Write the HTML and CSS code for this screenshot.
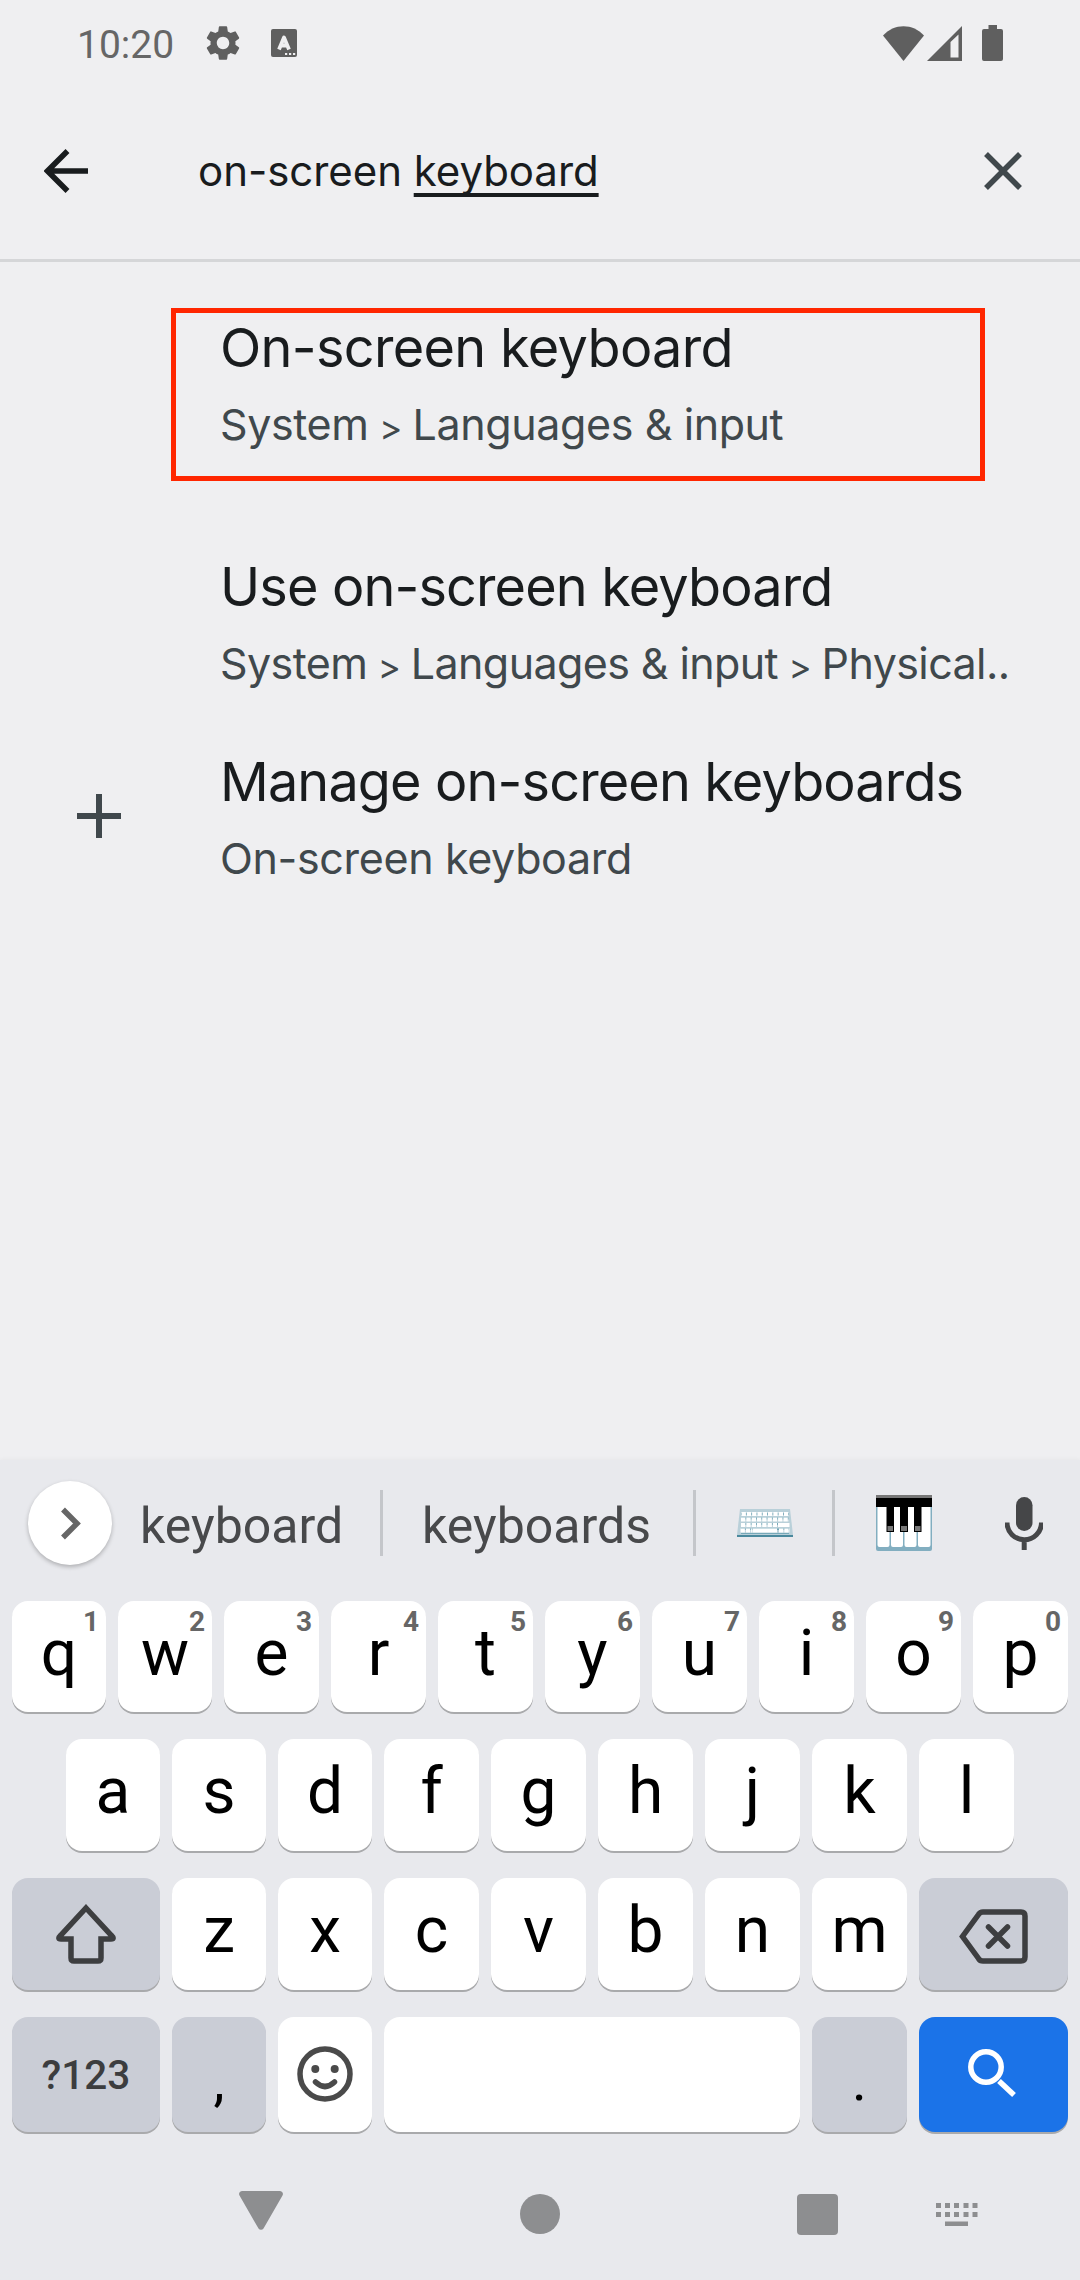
FILE: index.html
```html
<!DOCTYPE html>
<html lang="en">
<head>
<meta charset="utf-8">
<title>Settings search</title>
<link rel="stylesheet" href="styles.css">
</head>
<body>
<div class="screen">
  <header class="status">
    <span class="clock">10:20</span>
    <svg class="gear" viewBox="2.2 2 19.6 20"><path d="M19.14 12.94c.04-.3.06-.61.06-.94 0-.32-.02-.64-.07-.94l2.03-1.58a.49.49 0 0 0 .12-.61l-1.92-3.32a.488.488 0 0 0-.59-.22l-2.39.96c-.5-.38-1.03-.7-1.62-.94L14.400 2.810a.484.484 0 0 0-.48-.41h-3.840a.470.470 0 0 0-.47.410L9.250 5.350C8.660 5.590 8.120 5.920 7.630 6.290L5.240 5.330a.480.480 0 0 0-.59.220L2.740 8.870a.470.470 0 0 0 .12.610l2.030 1.580c-.05.3-.09.630-.09.940s.02.640.07.940l-2.030 1.580a.490.490 0 0 0-.12.610l1.920 3.320c.12.220.370.290.590.220l2.390-.960c.5.380 1.030.7 1.620.940l.360 2.540c.05.240.240.410.480.410h3.840c.240 0 .440-.170.470-.410l.360-2.540c.590-.240 1.130-.560 1.620-.940l2.390.960c.220.080.470 0 .590-.220l1.920-3.320a.470.470 0 0 0-.12-.610l-2.010-1.580zM12 15.600A3.610 3.610 0 0 1 8.400 12c0-1.980 1.620-3.600 3.600-3.600s3.600 1.620 3.600 3.600-1.620 3.600-3.600 3.600z"/></svg>
    <svg class="langicon" viewBox="0 0 26 28"><rect width="26" height="28" rx="2"/><path class="cut" d="M8 20.500 13 8.500l5 12M10 16.500h6"/><path class="dots" d="M14 24h2.200v2H14zM18 24h2.200v2H18zM22 24h2.200v2H22z"/></svg>
    <span class="spacer"></span>
    <svg class="wifi" viewBox="0 0 41 35"><path d="M0 9.500C11-3 30-3 41 9.500L20.500 35z"/></svg>
    <svg class="signal" viewBox="0 0 35 35"><path fill-rule="evenodd" d="M0 35 35 0v35zM23.500 16v15.500h8V8.500z"/></svg>
    <svg class="battery" viewBox="0 0 21 36"><path d="M6.500 0h8.500v4h4a2 2 0 0 1 2 2v28a2 2 0 0 1-2 2H2a2 2 0 0 1-2-2V6a2 2 0 0 1 2-2h4.500z"/></svg>
  </header>

  <div class="search">
    <svg class="back" viewBox="0 0 44 44"><path d="M44 22H5M23.500 2 3.500 22l20 20"/></svg>
    <div class="query">on-screen <span class="composing">keyboard</span></div>
    <svg class="close" viewBox="0 0 38 38"><path d="M2 2l34 34M36 2 2 36"/></svg>
  </div>

  <main class="results">
    <div class="result result-marked">
      <div class="title t1">On-screen keyboard</div>
      <div class="path p1">System <span class="sep">&gt;</span> Languages &amp; input</div>
      <div class="marker"></div>
    </div>
    <div class="result">
      <div class="title">Use on-screen keyboard</div>
      <div class="path p2">System <span class="sep">&gt;</span> Languages &amp; input <span class="sep">&gt;</span> Physical..</div>
    </div>
    <div class="result">
      <svg class="plus" viewBox="0 0 44 44"><path d="M22 0v44M0 22h44"/></svg>
      <div class="title">Manage on-screen keyboards</div>
      <div class="path p3">On-screen keyboard</div>
    </div>
  </main>

  <section class="keyboard">
    <div class="suggestions">
      <div class="expand"><svg viewBox="0 0 20 33"><path d="M2 2.500 16 16.500 2 30.500"/></svg></div>
      <span class="word word-a">keyboard</span>
      <i class="rule"></i>
      <span class="word word-b">keyboards</span>
      <i class="rule"></i>
      <span class="emoji"><svg class="kbd" viewBox="0 0 56 28">
        <path fill="#b9d0d9" d="M3 0h50l3 26H0z"/><path fill="#4a899d" d="M0 26h56v2H0z"/><path fill="#76a8b8" d="M4 4h48v2H4zM4 8.500h48v2H4zM4 14h48v2H4zM4 19.500h48v1.500H4zM4 24h48v1H4z"/>
        <path class="keys" d="M4.500 5H52M4 10.500H52M4 16H40M3.500 21.500H15M42 21.500H53"/><path stroke="#fff" stroke-width="3.800" d="M41 16H52.500M15.500 21.500H40"/>
      </svg></span>
      <i class="rule"></i>
      <span class="emoji"><svg class="piano" viewBox="0 0 56 56">
        <rect y="1" width="56" height="55" rx="2" fill="#82aec0"/><path fill="#fff" d="M1.500 11h12v39a2 2 0 0 1-2 2h-8a2 2 0 0 1-2-2zM15 11h12v39a2 2 0 0 1-2 2h-8a2 2 0 0 1-2-2zM28.500 11h12v39a2 2 0 0 1-2 2h-8a2 2 0 0 1-2-2zM42 11h12.500v39a2 2 0 0 1-2 2H44a2 2 0 0 1-2-2z"/>
        <path d="M0 2h56v10H0zM10.500 11h7.500v26h-7.500zM24 11h8v26h-8zM38 11h7.500v26H38z"/><path fill="#777" d="M0 0h56v3H0zM11.500 31h5.500v5h-5.500zM25 31h6v5h-6zM39 31h5.500v5H39z"/>
      </svg></span>
      <svg class="mic" viewBox="0 0 38 53"><rect x="11" width="16.500" height="34" rx="8.250"/><path d="M2 25.500a17 17 0 0 0 34.500 0M19.200 42v11"/></svg>
    </div>

    <div class="row row-1">
      <div class="key">q<sup>1</sup></div><div class="key">w<sup>2</sup></div><div class="key">e<sup>3</sup></div><div class="key">r<sup>4</sup></div><div class="key">t<sup>5</sup></div><div class="key">y<sup>6</sup></div><div class="key">u<sup>7</sup></div><div class="key">i<sup>8</sup></div><div class="key">o<sup>9</sup></div><div class="key">p<sup>0</sup></div>
    </div>
    <div class="row row-2">
      <div class="key">a</div><div class="key">s</div><div class="key">d</div><div class="key">f</div><div class="key">g</div><div class="key">h</div><div class="key">j</div><div class="key">k</div><div class="key">l</div>
    </div>
    <div class="row row-3">
      <div class="key dim"><svg class="shift" viewBox="0 0 62 60"><path d="M31 4 56.500 31.500Q60 35 56 35H46V54Q46 57 43 57H19Q16 57 16 54V35H6Q2 35 5.500 31.500z"/></svg></div>
      <div class="key">z</div><div class="key">x</div><div class="key">c</div><div class="key">v</div><div class="key">b</div><div class="key">n</div><div class="key">m</div>
      <div class="key dim"><svg class="erase" viewBox="0 0 69 55"><path d="M24 3h38q4 0 4 4v41q0 4-4 4H24q-3 0-4.500-2.500L3.500 27.500 19.500 5.500Q21 3 24 3z"/><path d="M29.500 18l19 19M48.500 18l-19 19"/></svg></div>
    </div>
    <div class="row row-4">
      <div class="key dim symbols">?123</div>
      <div class="key dim punct">,</div>
      <div class="key"><svg class="smile" viewBox="0 0 56 56"><circle cx="28" cy="28" r="25"/><path d="M18.500 36q9.500 9 19 0"/><g><circle cx="18.300" cy="23" r="4"/><circle cx="37.700" cy="23" r="4"/></g></svg></div>
      <div class="key"></div>
      <div class="key dim punct">.</div>
      <div class="key go"><svg class="find" viewBox="0 0 48 48"><circle cx="18" cy="18" r="15.200"/><path d="M31 32 46 46"/></svg></div>
    </div>

    <nav class="navbar">
      <svg class="nav-back" viewBox="0 0 44 39"><path d="M3 0h38a3 3 0 0 1 2.500 4.500L24.500 37.500a3 3 0 0 1-5 0L.5 4.500A3 3 0 0 1 3 0z"/></svg>
      <svg class="nav-home" viewBox="0 0 40 40"><circle cx="20" cy="20" r="20"/></svg>
      <svg class="nav-recent" viewBox="0 0 41 41"><rect width="41" height="41" rx="4"/></svg>
      <svg class="nav-ime" viewBox="0 0 42 23"><path d="M0 0h5v5H0zM9 0h5v5H9zM18 0h5v5h-5zM27.500 0h5v5h-5zM36.500 0h5v5h-5zM0 9h5v5H0zM9 9h5v5H9zM18 9h5v5h-5zM27.500 9h5v5h-5zM36.500 9h5v5h-5zM9 18.500h23v4.500H9z"/></svg>
    </nav>
  </section>
</div>
</body>
</html>
```
FILE: styles.css
```css
* { box-sizing: border-box; }
body { margin: 0; background: #efeff1; }
svg { display: block; flex: none; }

.screen {
  width: 1080px;
  height: 2280px;
  display: flex;
  flex-direction: column;
  overflow: hidden;
  font-family: Inter, "Liberation Sans", sans-serif;
  color: #191c1e;
}

/* Status bar */
.status {
  height: 86px;
  padding: 0 77px;
  display: flex;
  align-items: center;
  font-family: Roboto, sans-serif;
  fill: #5f5f5f;
}
.clock { width: 129px; font-size: 39px; line-height: 86px; color: #666; padding-top: 3px; }
.gear { width: 34px; height: 36px; }
.langicon { width: 26px; height: 28px; margin-left: 31px; }
.langicon .cut { fill: none; stroke: #efeff1; stroke-width: 3.8; stroke-linejoin: round; }
.langicon .dots { fill: #efeff1; }
.spacer { flex: 1; }
.wifi { width: 41px; height: 35px; margin-right: 3px; }
.signal { width: 35px; height: 35px; margin-right: 20px; }
.battery { width: 21px; height: 36px; }

/* Search field */
.search {
  height: 176px;
  border-bottom: 3px solid #d5d6d8;
  padding: 0 58px 4px 44px;
  display: flex;
  align-items: center;
}
.search path { fill: none; stroke: #191c1e; stroke-width: 5.5; }
.back { width: 44px; height: 44px; }
.query { flex: 1; margin-left: 110px; font-size: 42px; letter-spacing: -0.05px; line-height: 60px; white-space: nowrap; }
.composing { text-decoration: underline; text-decoration-thickness: 4px; text-underline-offset: 7px; text-decoration-skip-ink: none; }
.close { width: 38px; height: 38px; }
.search .close path { stroke: #40484c; }

/* Results */
.results { flex: 1; padding-top: 46px; }
.result { position: relative; height: 195px; padding-left: 220px; white-space: nowrap; }
.result-marked { height: 239px; }
.title { font-size: 54px; line-height: 80px; letter-spacing: -0.87px; }
.t1 { letter-spacing: -0.68px; }
.path { font-size: 43px; line-height: 72px; color: #40484c; }
.sep { font-size: 35px; margin: 0 -1px; }
.p1 { letter-spacing: -0.4px; }
.p2 { letter-spacing: -0.6px; }
.p3 { letter-spacing: -0.35px; }
.marker { position: absolute; left: 171px; top: 0; width: 814px; height: 173px; border: 5px solid #ff2600; }
.plus { position: absolute; left: 77px; top: 52px; width: 44px; height: 44px; }
.plus path { stroke: #40484c; stroke-width: 6; }

/* Keyboard */
.keyboard {
  height: 820px;
  background: #e8e9ed;
  box-shadow: 0 0 5px rgba(0, 0, 0, .05);
  font-family: Roboto, sans-serif;
}
.suggestions { height: 141px; padding: 0 37px 15px 28px; display: flex; align-items: center; }
.expand {
  width: 84px; height: 84px; border-radius: 50%;
  background: #fff; box-shadow: 0 2px 4px rgba(0, 0, 0, .25);
  display: flex; align-items: center; justify-content: center;
}
.expand svg { width: 20px; height: 33px; margin-left: 2px; fill: none; stroke: #666; stroke-width: 5.5; }
.word { font-size: 50px; line-height: 60px; color: #48494b; padding-top: 5px; }
.word-a { width: 268px; padding-left: 28px; }
.word-b { width: 310px; padding-left: 39px; }
.rule { width: 3px; height: 66px; background: #c4c6ca; }
.emoji { width: 136px; display: flex; justify-content: center; padding-left: 2px; }
.kbd { width: 56px; height: 28px; }
.keys { stroke: #fff; stroke-width: 3.8; stroke-dasharray: 4.4 .9; }
.piano { width: 56px; height: 56px; }
.mic { width: 38px; height: 53px; margin-left: auto; fill: #454648; }
.mic path { fill: none; stroke: #454648; stroke-width: 5; }

.row { display: grid; gap: 12px; height: 112px; margin: 0 12px 27px; }
.row-1 { height: 111px; grid-template-columns: repeat(2, 94px) repeat(8, 95px); }
.row-2 { margin-left: 66px; margin-right: 66px; grid-template-columns: repeat(3, 94px) repeat(6, 95px); }
.row-3 { grid-template-columns: 148px repeat(2, 94px) repeat(5, 95px) 149px; }
.row-4 { height: 115px; margin-bottom: 0; grid-template-columns: 148px 94px 94px 416px 95px 149px; }
.key {
  position: relative;
  display: flex;
  align-items: center;
  justify-content: center;
  background: #fff;
  border-radius: 16px;
  box-shadow: 0 2px 0 #a9aaac;
  color: #000;
  font-size: 64px;
  line-height: 104px;
  padding-bottom: 6px;
}
.key sup { position: absolute; top: 7px; right: 7px; font-size: 28px; line-height: 28px; font-weight: 700; color: #666; }
.key:has(svg) { padding-bottom: 0; }
.dim { background: #cacdd6; }
.go { background: #1b73e8; }
.symbols { font-size: 40.5px; font-weight: 500; color: #3c3d3f; padding-bottom: 0; }
.punct { font-size: 56px; line-height: 100px; padding-bottom: 0; padding-top: 12px; }

.key svg { fill: none; stroke: #3d3e40; stroke-width: 5.5; }
.shift { width: 62px; height: 60px; }
.erase { width: 69px; height: 55px; margin-top: 4px; stroke-linecap: round; }
.smile { width: 56px; height: 56px; margin-bottom: 1px; stroke-linecap: round; }
.key .smile { stroke: #4a4a4a; }
.key .smile g { fill: #4a4a4a; stroke: none; }
.find { width: 48px; height: 48px; margin-bottom: 4px; margin-right: 3px; }
.key .find { stroke: #fff; }

/* Navigation bar */
.navbar { height: 148px; padding: 16px 102px 0 239px; display: flex; align-items: center; fill: #8d8e90; }
.nav-back { width: 44px; height: 39px; margin-top: -7px; }
.nav-home { width: 40px; height: 40px; margin-left: 237px; }
.nav-recent { width: 41px; height: 41px; margin-left: 237px; }
.nav-ime { width: 42px; height: 23px; margin-left: auto; }
```
